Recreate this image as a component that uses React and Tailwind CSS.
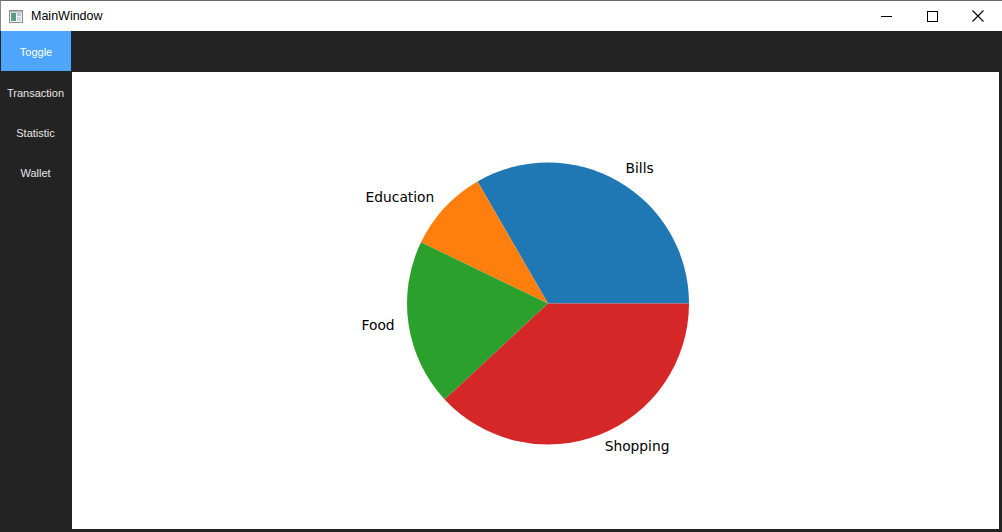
import React from "react";

const data = [
  { label: "Bills", value: 35, color: "#1f77b4" },
  { label: "Education", value: 10, color: "#ff7f0e" },
  { label: "Food", value: 20, color: "#2ca02c" },
  { label: "Shopping", value: 40, color: "#d62728" },
];

function Pie() {
  const cx = 476;
  const cy = 231.5;
  const r = 141;
  const total = data.reduce((s, d) => s + d.value, 0);
  let start = 0;
  const slices = data.map((d) => {
    const sweep = (d.value / total) * Math.PI * 2;
    const a0 = start;
    const a1 = start + sweep;
    start = a1;
    const x0 = cx + r * Math.cos(a0);
    const y0 = cy - r * Math.sin(a0);
    const x1 = cx + r * Math.cos(a1);
    const y1 = cy - r * Math.sin(a1);
    const large = sweep > Math.PI ? 1 : 0;
    const path = `M ${cx} ${cy} L ${x0} ${y0} A ${r} ${r} 0 ${large} 0 ${x1} ${y1} Z`;
    const mid = (a0 + a1) / 2;
    const lx = cx + 1.1 * r * Math.cos(mid);
    const ly = cy - 1.1 * r * Math.sin(mid) - 1.5;
    return { ...d, path, lx, ly, anchor: Math.cos(mid) >= 0 ? "start" : "end" };
  });
  return (
    <svg width="927" height="457" viewBox="0 0 927 457" className="block">
      {slices.map((s) => (
        <path key={s.label} d={s.path} fill={s.color} />
      ))}
      {slices.map((s) => (
        <text
          key={s.label + "t"}
          x={s.lx}
          y={s.ly}
          textAnchor={s.anchor}
          dominantBaseline="central"
          fontFamily="DejaVu Sans, sans-serif"
          fontSize="13.8"
          fill="#000"
        >
          {s.label}
        </text>
      ))}
    </svg>
  );
}

export default function App() {
  const nav = ["Transaction", "Statistic", "Wallet"];
  return (
    <div
      className="w-[1002px] h-[532px] flex flex-col overflow-hidden bg-[#232323]"
      style={{ fontFamily: '"Liberation Sans", Arial, sans-serif' }}
    >
      <div className="h-[31px] bg-white flex items-center border-t border-[#6b6b6b] border-l border-l-[#8a8a8a] shrink-0">
        <svg width="14" height="13" viewBox="0 0 14 13" className="ml-[8px]">
          <rect x="0.5" y="0.5" width="13" height="12" fill="#f4f4f4" stroke="#8c8c8c" />
          <rect x="2" y="3" width="5" height="8" fill="#5b9a86" />
          <rect x="8" y="3" width="4" height="3" fill="#b9c8d0" />
          <rect x="8" y="7" width="4" height="4" fill="#cfd8dc" />
          <rect x="1" y="1" width="12" height="1.5" fill="#a9b7c0" />
        </svg>
        <span className="ml-[8px] text-[12.5px] text-black leading-none">MainWindow</span>
        <div className="ml-auto flex h-full items-center">
          <div className="w-[46px] h-full flex items-center justify-center">
            <div className="w-[11px] h-px bg-black" />
          </div>
          <div className="w-[46px] h-full flex items-center justify-center">
            <div className="w-[11px] h-[11px] border border-black" />
          </div>
          <div className="w-[46px] h-full flex items-center justify-center mr-[1px]">
            <svg width="12" height="12" viewBox="0 0 12 12">
              <path d="M0.5 0.5 L11.5 11.5 M11.5 0.5 L0.5 11.5" stroke="#000" strokeWidth="1.1" />
            </svg>
          </div>
        </div>
      </div>
      <div className="flex-1 flex pl-px">
        <div className="w-[70px] flex flex-col shrink-0">
          <div className="h-[40px] bg-[#4ea6fc] flex items-center justify-center pt-[2px] text-[11px] text-white">
            Toggle
          </div>
          {nav.map((n) => (
            <div
              key={n}
              className="h-[40px] flex items-center justify-center pt-[4px] pr-[1px] text-[11px] text-[#e6e6e6]"
            >
              {n}
            </div>
          ))}
        </div>
        <div className="flex-1 flex flex-col">
          <div className="h-[41px] shrink-0" />
          <div className="flex-1 bg-white ml-px mr-[3px] mb-[3px] overflow-hidden">
            <Pie />
          </div>
        </div>
      </div>
    </div>
  );
}
